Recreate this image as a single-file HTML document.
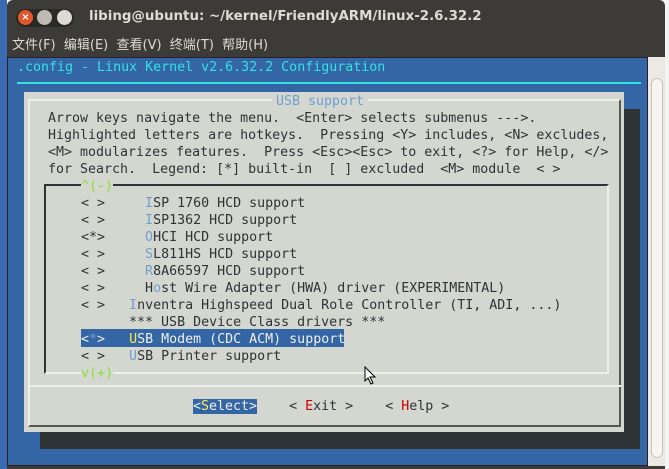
<!DOCTYPE html>
<html><head><meta charset="utf-8"><style>
*{margin:0;padding:0;box-sizing:border-box}
body{width:669px;height:469px;overflow:hidden;background:#fff;position:relative;font-family:"DejaVu Sans Mono","Liberation Mono",monospace}
.a{position:absolute}
.t{position:absolute;font-size:13.3px;line-height:17px;white-space:pre;color:#2e3436}
.lb{color:#729fcf}.g{color:#8ae234}.y{color:#fce94f}.r{color:#cc0000}
</style></head><body>
<div class="a" style="left:0;top:0;width:7px;height:469px;background:#3a6ab0"></div>
<div class="a" style="left:662px;top:0;width:7px;height:469px;background:#f4f4f4"></div>
<div class="a" style="left:7px;top:0;width:658px;height:469px;background:#3c3b37;border-radius:6px 6px 0 0"></div>
<div class="a" style="left:16px;top:9px;width:58px;height:18px;border-radius:9px;background:#2a2925"></div>
<div class="a" style="left:18px;top:10px;width:15px;height:15px;border-radius:50%;background:#e0572a;color:#fff;font:bold 10px 'DejaVu Sans';text-align:center;line-height:15px">×</div>
<div class="a" style="left:37px;top:10px;width:15px;height:15px;border-radius:50%;background:#bdbab3"></div>
<div class="a" style="left:57px;top:10px;width:15px;height:15px;border-radius:50%;background:#dedad3"></div>
<div class="a" style="left:89px;top:9px;color:#dfdbd2;font:bold 13.4px 'DejaVu Sans','Liberation Sans',sans-serif">libing@ubuntu: ~/kernel/FriendlyARM/linux-2.6.32.2</div>
<div class="a" style="left:12px;top:34px;color:#dfdbd2;font:13px 'DejaVu Sans','Noto Sans CJK SC',sans-serif;word-spacing:0px">文件(F)&nbsp; 编辑(E)&nbsp; 查看(V)&nbsp; 终端(T)&nbsp; 帮助(H)</div>
<div class="a" style="left:7px;top:57px;width:641px;height:409px;background:#3465a4;border:1px solid #2a1e2a"></div>
<div class="a" style="left:648px;top:57px;width:17px;height:409px;background:#ece9e3"></div>
<div class="a" style="left:651px;top:78px;width:12px;height:380px;border-radius:6px;background:#f6f5f2;border:1px solid #c8c4bc"></div>
<div class="t" style="left:17px;top:59px;color:#34e2e2">.config - Linux Kernel v2.6.32.2 Configuration</div>
<div class="a" style="left:17px;top:82px;width:624px;height:2px;background:#34e2e2"></div>
<div class="a" style="left:40px;top:109px;width:600px;height:340px;background:#2e3436"></div>
<div class="a" style="left:24px;top:92px;width:600px;height:340px;background:#d3d7cf"></div>
<div class="a" style="left:28px;top:99px;width:593px;height:328px;border:2px solid #eeeeec;border-right-color:#555753;border-bottom-color:#555753"></div>
<div class="a" style="left:28px;top:385px;width:593px;height:2px;background:#eeeeec"></div>
<div class="t" style="left:272px;top:93px;background:#d3d7cf;padding:0 4px" ><span class="lb">USB support</span></div>
<div class="t" style="left:48px;top:110px">Arrow keys navigate the menu.  &lt;Enter&gt; selects submenus ---&gt;.
Highlighted letters are hotkeys.  Pressing &lt;Y&gt; includes, &lt;N&gt; excludes,
&lt;M&gt; modularizes features.  Press &lt;Esc&gt;&lt;Esc&gt; to exit, &lt;?&gt; for Help, &lt;/&gt;
for Search.  Legend: [*] built-in  [ ] excluded  &lt;M&gt; module  &lt; &gt;</div>
<div class="a" style="left:44px;top:184px;width:565px;height:190px;border:2px solid #2e3436;border-right-color:#eeeeec;border-bottom-color:#eeeeec"></div>
<div class="a" style="left:81px;top:329px;width:263px;height:18px;background:#3465a4"></div>
<div class="t" style="left:81px;top:178px"><span class="g" style="background:#d3d7cf">^(-)</span>
&lt; &gt;     <span class="lb">I</span>SP 1760 HCD support
&lt; &gt;     <span class="lb">I</span>SP1362 HCD support
&lt;*&gt;     <span class="lb">O</span>HCI HCD support
&lt; &gt;     <span class="lb">S</span>L811HS HCD support
&lt; &gt;     <span class="lb">R</span>8A66597 HCD support
&lt; &gt;     H<span class="lb">o</span>st Wire Adapter (HWA) driver (EXPERIMENTAL)
&lt; &gt;   <span class="lb">I</span>nventra Highspeed Dual Role Controller (TI, ADI, ...)
      *** USB Device Class drivers ***
<span style="color:#eeeeec">&lt;<span class="lb">*</span>&gt;   <span class="y">U</span>SB Modem (CDC ACM) support</span>
&lt; &gt;   <span class="lb">U</span>SB Printer support
<span class="g" style="background:#d3d7cf">v(+)</span></div>
<div class="t" style="left:193px;top:398px"><span style="background:#3465a4;color:#eeeeec">&lt;<span class="y">S</span>elect&gt;</span>    &lt; <span class="r">E</span>xit &gt;    &lt; <span class="r">H</span>elp &gt;</div>
<svg class="a" style="left:364px;top:366px" width="14" height="20"><path d="M1 1 L1 15 L4 12 L7 18 L9 17 L6 11 L11 11 Z" fill="#fff" stroke="#000"/></svg>
</body></html>
